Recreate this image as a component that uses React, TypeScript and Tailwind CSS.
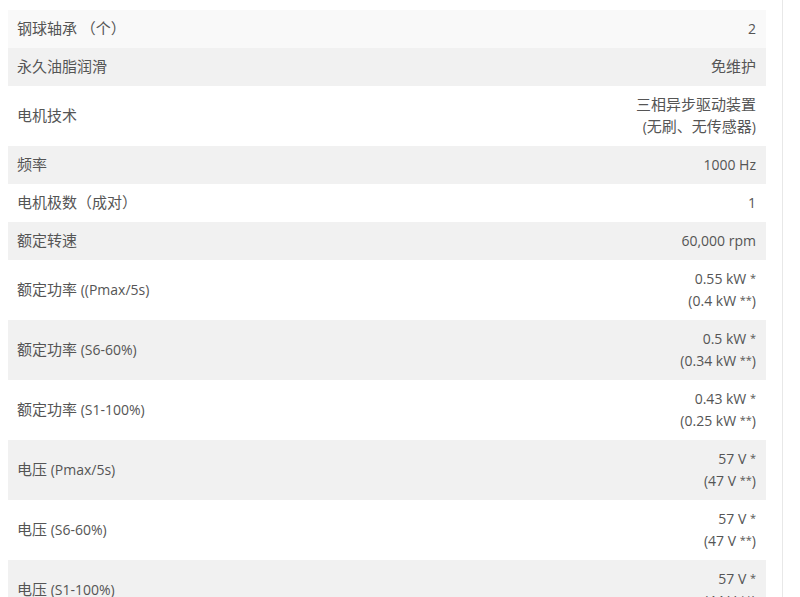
const rows: { label: string; value: string[]; bg: string }[] = [
  { label: '钢球轴承 （个）', value: ['2'], bg: 'bg-[#f9f9f9]' },
  { label: '永久油脂润滑', value: ['免维护'], bg: 'bg-[#f1f1f1]' },
  { label: '电机技术', value: ['三相异步驱动装置', '(无刷、无传感器)'], bg: 'bg-white' },
  { label: '频率', value: ['1000 Hz'], bg: 'bg-[#f1f1f1]' },
  { label: '电机极数（成对）', value: ['1'], bg: 'bg-white' },
  { label: '额定转速', value: ['60,000 rpm'], bg: 'bg-[#f1f1f1]' },
  { label: '额定功率 ((Pmax/5s)', value: ['0.55 kW *', '(0.4 kW **)'], bg: 'bg-white' },
  { label: '额定功率 (S6-60%)', value: ['0.5 kW *', '(0.34 kW **)'], bg: 'bg-[#f1f1f1]' },
  { label: '额定功率 (S1-100%)', value: ['0.43 kW *', '(0.25 kW **)'], bg: 'bg-white' },
  { label: '电压 (Pmax/5s)', value: ['57 V *', '(47 V **)'], bg: 'bg-[#f1f1f1]' },
  { label: '电压 (S6-60%)', value: ['57 V *', '(47 V **)'], bg: 'bg-white' },
  { label: '电压 (S1-100%)', value: ['57 V *', '(44 V **)'], bg: 'bg-[#f1f1f1]' },
];

// CJK glyphs in the original render a touch larger than the latin text
function Txt({ text }: { text: string }) {
  const parts = text.split(/([\u3000-\u9fff\uff00-\uffef]+|\*+)/).filter(Boolean);
  return (
    <div className="h-[22px] whitespace-nowrap">
      {parts.map((p, i) =>
        /^\*+$/.test(p) ? (
          <span key={i} className="relative -top-[2px] text-[11px] leading-none">
            {p}
          </span>
        ) : /[\u3000-\u9fff\uff00-\uffef]/.test(p) ? (
          <span key={i} className="text-[15px] leading-none">
            {p}
          </span>
        ) : (
          <span key={i}>{p}</span>
        ),
      )}
    </div>
  );
}

export default function App() {
  return (
    <div className="flex h-[597px] overflow-hidden bg-white font-['Open_Sans','Noto_Sans_CJK_SC',sans-serif] text-[14px] leading-[22px] text-[#555]">
      <div className="ml-2 mt-[10px] w-[758px]">
        <table className="w-full border-collapse">
          <tbody>
            {rows.map((r) => (
              <tr key={r.label} className={r.bg}>
                <td className="py-2 pl-[9px] align-middle">
                  <Txt text={r.label} />
                </td>
                <td className="py-2 pr-[10px] text-right align-middle">
                  {r.value.map((v) => (
                    <Txt key={v} text={v} />
                  ))}
                </td>
              </tr>
            ))}
          </tbody>
        </table>
      </div>
      <div className="ml-4 w-px bg-[#e8e8e8]" />
    </div>
  );
}
